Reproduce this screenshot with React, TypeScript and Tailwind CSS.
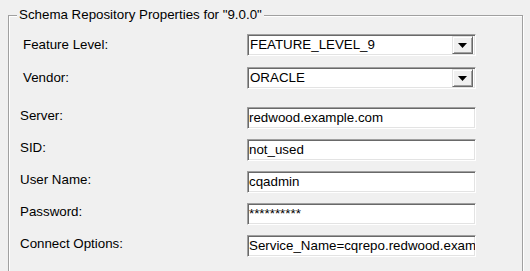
import type { ReactNode } from "react";

const font = { fontFamily: '"Liberation Sans", Arial, sans-serif' };

function Sunken({ children, className }: { children: ReactNode; className: string }) {
  return (
    <div
      className={`flex h-[22px] w-[229px] items-center overflow-hidden whitespace-nowrap border border-t-[#a0a0a0] border-l-[#a0a0a0] border-r-white border-b-white bg-white shadow-[inset_1px_1px_0_#696969,inset_-1px_-1px_0_#e3e3e3] ${className}`}
    >
      {children}
    </div>
  );
}

function Combo({ value }: { value: string }) {
  return (
    <Sunken className="pr-[2px]">
      <span className="flex-1 pl-[2px] leading-4">{value}</span>
      <div className="flex h-[18px] w-[21px] items-center justify-center border border-t-[#e3e3e3] border-l-[#e3e3e3] border-r-[#696969] border-b-[#696969] bg-[#f0f0f0] shadow-[inset_1px_1px_0_#fff,inset_-1px_-1px_0_#a0a0a0]">
        <svg width="9" height="5" viewBox="0 0 9 5">
          <polygon points="0,0 9,0 4.5,5" fill="#000" />
        </svg>
      </div>
    </Sunken>
  );
}

function Field({ value }: { value: string }) {
  return (
    <Sunken className="pl-[1px]">
      <span className="leading-4">{value}</span>
    </Sunken>
  );
}

export default function App() {
  return (
    <div
      className="h-[271px] w-[530px] overflow-hidden bg-[#f0f0f0] pl-[8px] pt-[15px] text-[13.33px] text-black"
      style={font}
    >
      <div className="relative h-[280px] w-[515px] border border-[#a0a0a0] shadow-[inset_1px_1px_0_#fff,1px_1px_0_#fff]">
        <span className="absolute -top-[9px] left-[8px] bg-[#f0f0f0] px-[2px] leading-4">
          Schema Repository Properties for "9.0.0"
        </span>

        <div className="flex flex-col pt-[18px]">
          <div className="flex items-center">
            <span className="w-[238px] pl-[14px] leading-4">Feature Level:</span>
            <Combo value="FEATURE_LEVEL_9" />
          </div>
          <div className="mt-[11px] flex items-center">
            <span className="w-[238px] pl-[14px] leading-4">Vendor:</span>
            <Combo value="ORACLE" />
          </div>

          <div className="mt-[18px] flex items-center">
            <span className="w-[238px] pb-1 pl-[11px] leading-4">Server:</span>
            <Field value="redwood.example.com" />
          </div>
          <div className="mt-[10px] flex items-center">
            <span className="w-[238px] pb-1 pl-[11px] leading-4">SID:</span>
            <Field value="not_used" />
          </div>
          <div className="mt-[10px] flex items-center">
            <span className="w-[238px] pb-1 pl-[11px] leading-4">User Name:</span>
            <Field value="cqadmin" />
          </div>
          <div className="mt-[10px] flex items-center">
            <span className="w-[238px] pb-1 pl-[11px] leading-4">Password:</span>
            <Field value="**********" />
          </div>
          <div className="mt-[10px] flex items-center">
            <span className="w-[238px] pb-1 pl-[11px] leading-4">Connect Options:</span>
            <Field value="Service_Name=cqrepo.redwood.example.com" />
          </div>
        </div>
      </div>
    </div>
  );
}
